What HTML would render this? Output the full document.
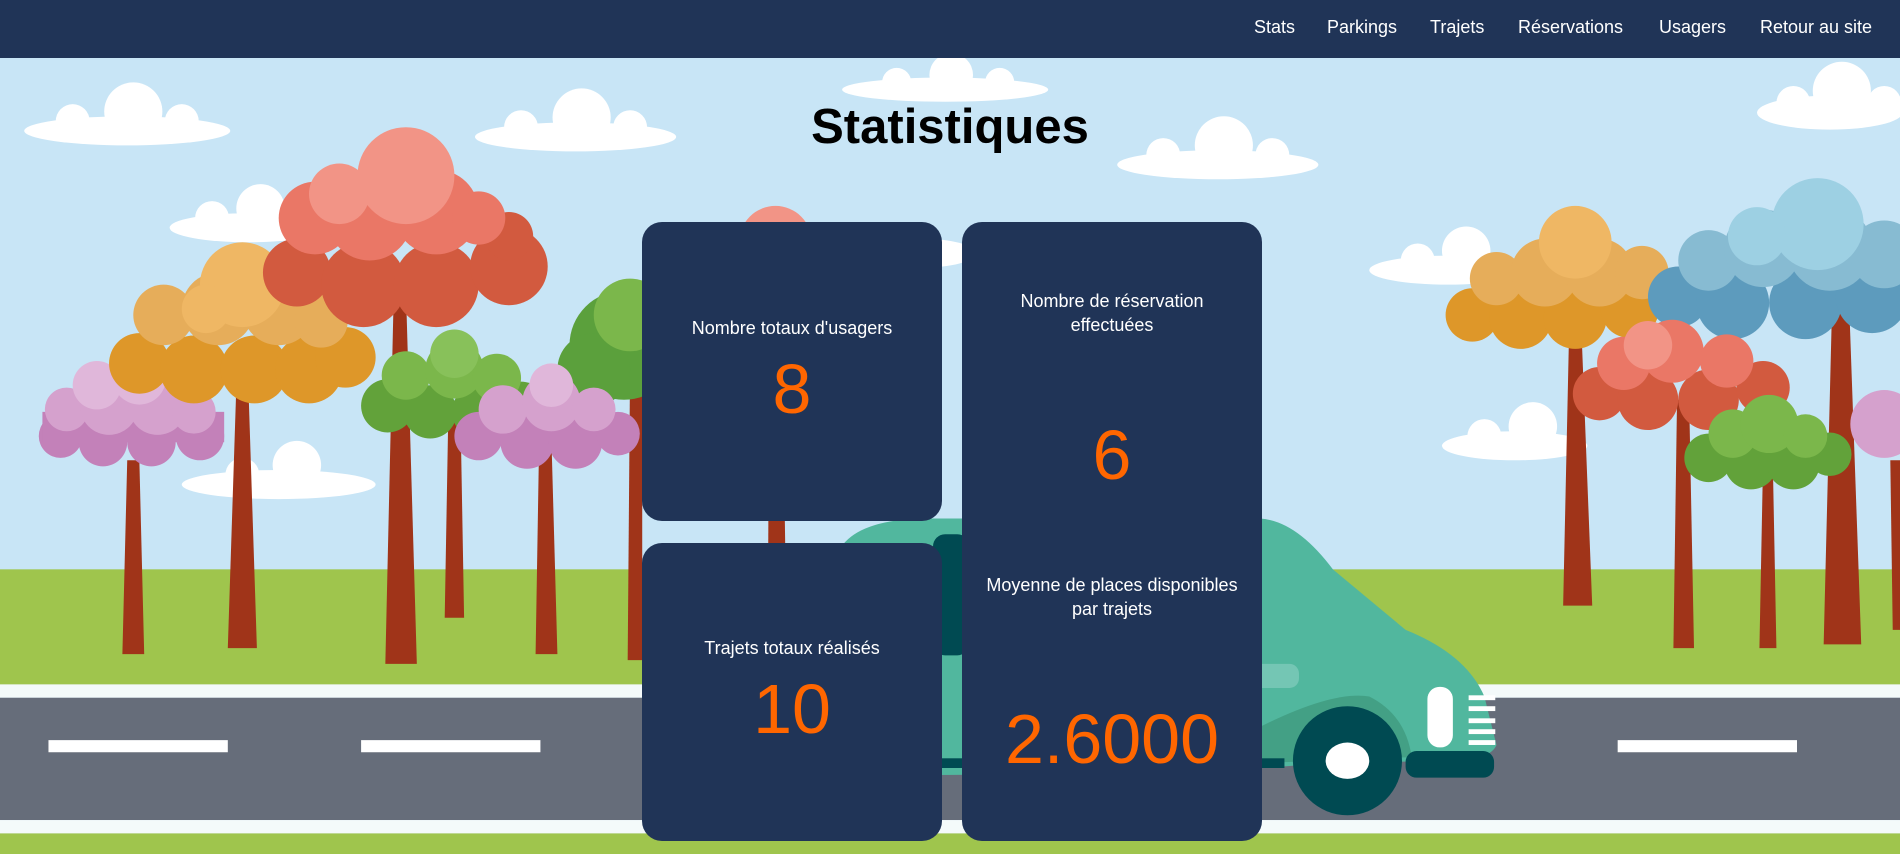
<!DOCTYPE html>
<html><head><meta charset="utf-8"><style>
*{margin:0;padding:0;box-sizing:border-box}
body{width:1900px;height:854px;overflow:hidden;position:relative;font-family:"Liberation Sans",Arial,sans-serif;background:#c8e5f6}
svg.bg{position:absolute;left:0;top:0;width:1900px;height:854px}
nav{position:absolute;left:0;top:0;width:1900px;height:58px;background:#203457;}
nav a{position:absolute;top:17px;color:#fff;font-size:18px;text-decoration:none;white-space:nowrap}
h1{position:absolute;left:0;width:1900px;top:99px;text-align:center;font-size:49px;font-weight:bold;color:#000}
.card{position:absolute;background:#203457;border-radius:20px;color:#fff;}
.t{position:absolute;left:0;right:0;text-align:center;font-size:18px;line-height:24px}
.n{position:absolute;left:0;right:0;text-align:center;font-size:70px;line-height:80px;color:#ff6600}
</style></head><body>
<svg class="bg" viewBox="0 0 1568 705" preserveAspectRatio="none">
<rect width="1568" height="705" fill="#c8e5f6"/>
<g fill="#fff">
<g transform="translate(105,100)"><ellipse cx="0" cy="8" rx="85" ry="12"/><circle cx="-45" cy="0" r="14"/><circle cx="5" cy="-8" r="24"/><circle cx="45" cy="0" r="14"/></g>
<g transform="translate(475,105)"><ellipse cx="0" cy="8" rx="83" ry="12"/><circle cx="-45" cy="0" r="14"/><circle cx="5" cy="-8" r="24"/><circle cx="45" cy="0" r="14"/></g>
<g transform="translate(780,68)"><ellipse cx="0" cy="6" rx="85" ry="10"/><circle cx="-40" cy="0" r="12"/><circle cx="5" cy="-6" r="18"/><circle cx="45" cy="0" r="12"/></g>
<g transform="translate(1005,128)"><ellipse cx="0" cy="8" rx="83" ry="12"/><circle cx="-45" cy="0" r="14"/><circle cx="5" cy="-8" r="24"/><circle cx="45" cy="0" r="14"/></g>
<g transform="translate(1510,85)"><ellipse cx="0" cy="8" rx="60" ry="14"/><circle cx="-30" cy="0" r="14"/><circle cx="10" cy="-10" r="24"/><circle cx="45" cy="0" r="14"/></g>
<g transform="translate(205,180)"><ellipse cx="0" cy="8" rx="65" ry="12"/><circle cx="-30" cy="0" r="14"/><circle cx="10" cy="-8" r="20"/></g>
<g transform="translate(1195,215)"><ellipse cx="0" cy="8" rx="65" ry="12"/><circle cx="-25" cy="0" r="14"/><circle cx="15" cy="-8" r="20"/></g>
<g transform="translate(1250,360)"><ellipse cx="0" cy="8" rx="60" ry="12"/><circle cx="-25" cy="0" r="14"/><circle cx="15" cy="-8" r="20"/></g>
<g transform="translate(230,392)"><ellipse cx="0" cy="8" rx="80" ry="12"/><circle cx="-30" cy="0" r="14"/><circle cx="15" cy="-8" r="20"/></g>
<g transform="translate(760,205)"><ellipse cx="0" cy="4" rx="45" ry="12"/></g>
</g>
<rect y="470" width="1568" height="95" fill="#9fc54d"/>
<rect y="565" width="1568" height="11" fill="#f4fafa"/>
<rect y="576" width="1568" height="101" fill="#666d7a"/>
<rect y="677" width="1568" height="11" fill="#f4fafa"/>
<rect y="688" width="1568" height="17" fill="#9fc54d"/>
<g fill="#fff"><rect x="40" y="611" width="148" height="10"/><rect x="298" y="611" width="148" height="10"/><rect x="1335" y="611" width="148" height="10"/></g>
<g fill="#a03419">
<polygon points="105,380 115,380 119,540 101,540"/>
<polygon points="195,320 205,320 212,535 188,535"/>
<polygon points="325,240 335,240 344,548 318,548"/>
<polygon points="370,340 380,340 383,510 367,510"/>
<polygon points="445,360 455,360 460,540 442,540"/>
<polygon points="520,300 530,300 530,545 518,545"/>
<polygon points="635,250 645,250 648,450 634,450"/>
<polygon points="1295,270 1305,270 1314,500 1290,500"/>
<polygon points="1512,250 1526,250 1536,532 1505,532"/>
<polygon points="1384,330 1394,330 1398,535 1381,535"/>
<polygon points="1455,380 1463,380 1466,535 1452,535"/>
<polygon points="1560,380 1568,380 1568,520 1562,520"/>
</g>
<g fill="#5ba03c"><circle cx="515" cy="285" r="45"/><circle cx="490" cy="305" r="30"/></g>
<g fill="#7bb74b"><circle cx="520" cy="260" r="30"/></g>
<g fill="#f29486"><circle cx="640" cy="200" r="30"/></g>
<!-- pink left -->
<g fill="#c381b9"><circle cx="50" cy="360" r="18"/><circle cx="85" cy="365" r="20"/><circle cx="125" cy="365" r="20"/><circle cx="165" cy="360" r="20"/><rect x="35" y="340" width="150" height="25"/></g>
<g fill="#d5a1cd"><circle cx="55" cy="338" r="18"/><circle cx="90" cy="335" r="24"/><circle cx="130" cy="335" r="24"/><circle cx="160" cy="340" r="18"/></g>
<g fill="#e0b7da"><circle cx="80" cy="318" r="20"/><circle cx="115" cy="312" r="22"/></g>
<!-- orange left -->
<g fill="#de9729"><circle cx="115" cy="300" r="25"/><circle cx="160" cy="305" r="28"/><circle cx="210" cy="305" r="28"/><circle cx="255" cy="305" r="28"/><circle cx="285" cy="295" r="25"/></g>
<g fill="#e6ad5a"><circle cx="135" cy="260" r="25"/><circle cx="180" cy="255" r="30"/><circle cx="230" cy="255" r="30"/><circle cx="265" cy="265" r="22"/></g>
<g fill="#efb764"><circle cx="200" cy="235" r="35"/><circle cx="170" cy="255" r="20"/></g>
<!-- red big -->
<g fill="#d25a3f"><circle cx="245" cy="225" r="28"/><circle cx="300" cy="235" r="35"/><circle cx="360" cy="235" r="35"/><circle cx="420" cy="220" r="32"/><circle cx="420" cy="195" r="20"/></g>
<g fill="#ea7766"><circle cx="260" cy="180" r="30"/><circle cx="305" cy="180" r="35"/><circle cx="360" cy="175" r="35"/><circle cx="395" cy="180" r="22"/></g>
<g fill="#f29486"><circle cx="335" cy="145" r="40"/><circle cx="280" cy="160" r="25"/></g>
<!-- green small -->
<g fill="#62a23a"><circle cx="320" cy="335" r="22"/><circle cx="355" cy="340" r="22"/><circle cx="395" cy="340" r="22"/><circle cx="430" cy="335" r="20"/></g>
<g fill="#7bb74b"><circle cx="335" cy="310" r="20"/><circle cx="375" cy="305" r="24"/><circle cx="410" cy="312" r="20"/></g>
<g fill="#88c15a"><circle cx="375" cy="292" r="20"/></g>
<!-- pink mid -->
<g fill="#c381b9"><circle cx="395" cy="360" r="20"/><circle cx="435" cy="365" r="22"/><circle cx="475" cy="365" r="22"/><circle cx="510" cy="358" r="18"/></g>
<g fill="#d5a1cd"><circle cx="415" cy="338" r="20"/><circle cx="455" cy="332" r="24"/><circle cx="490" cy="338" r="18"/></g>
<g fill="#e0b7da"><circle cx="455" cy="318" r="18"/></g>
<!-- right orange -->
<g fill="#de9729"><circle cx="1215" cy="260" r="22"/><circle cx="1255" cy="262" r="26"/><circle cx="1300" cy="262" r="26"/><circle cx="1345" cy="255" r="24"/></g>
<g fill="#e6ad5a"><circle cx="1235" cy="230" r="22"/><circle cx="1275" cy="225" r="28"/><circle cx="1320" cy="225" r="28"/><circle cx="1355" cy="225" r="22"/></g>
<g fill="#efb764"><circle cx="1300" cy="200" r="30"/></g>
<!-- blue -->
<g fill="#5d9bbd"><circle cx="1385" cy="245" r="25"/><circle cx="1430" cy="250" r="30"/><circle cx="1490" cy="250" r="30"/><circle cx="1545" cy="245" r="30"/></g>
<g fill="#87bbd2"><circle cx="1410" cy="215" r="25"/><circle cx="1455" cy="205" r="32"/><circle cx="1510" cy="205" r="35"/><circle cx="1555" cy="210" r="28"/></g>
<g fill="#9dd0e3"><circle cx="1500" cy="185" r="38"/><circle cx="1450" cy="195" r="24"/></g>
<!-- red right -->
<g fill="#d25a3f"><circle cx="1320" cy="325" r="22"/><circle cx="1360" cy="330" r="25"/><circle cx="1410" cy="330" r="25"/><circle cx="1455" cy="320" r="22"/></g>
<g fill="#ea7766"><circle cx="1340" cy="300" r="22"/><circle cx="1380" cy="290" r="26"/><circle cx="1425" cy="298" r="22"/></g>
<g fill="#f29486"><circle cx="1360" cy="285" r="20"/></g>
<!-- green right -->
<g fill="#62a23a"><circle cx="1410" cy="378" r="20"/><circle cx="1445" cy="382" r="22"/><circle cx="1480" cy="382" r="22"/><circle cx="1510" cy="375" r="18"/></g>
<g fill="#7bb74b"><circle cx="1430" cy="358" r="20"/><circle cx="1460" cy="350" r="24"/><circle cx="1490" cy="360" r="18"/></g>
<g fill="#d5a1cd"><circle cx="1555" cy="350" r="28"/></g>
<path d="M690,640 L690,460 Q700,430 760,428 L1040,428 Q1070,430 1100,470 L1160,520 Q1210,540 1225,575 L1235,615 Q1230,627 1200,628 L1090,630 Q1000,640 690,640Z" fill="#51b79e"/>
<path d="M1040,600 Q1100,570 1130,575 Q1160,590 1165,625 L1040,630Z" fill="#43a085"/>
<rect x="770" y="441" width="30" height="100" rx="10" fill="#004a52"/>
<rect x="1030" y="548" width="42" height="20" rx="8" fill="#74c6b4"/>
<rect x="770" y="626" width="290" height="8" fill="#004a52"/>
<circle cx="1112" cy="628" r="45" fill="#004a52"/>
<ellipse cx="1112" cy="628" rx="18" ry="15" fill="#fff"/>
<rect x="1160" y="620" width="73" height="22" rx="9" fill="#004a52"/>
<rect x="1178" y="567" width="21" height="50" rx="10" fill="#fff"/>
<g fill="#fff"><rect x="1212" y="574" width="22" height="4"/><rect x="1212" y="583" width="22" height="4"/><rect x="1212" y="593" width="22" height="4"/><rect x="1212" y="602" width="22" height="4"/><rect x="1212" y="611" width="22" height="4"/></g>
</svg>
<nav>
<a style="left:1254px">Stats</a><a style="left:1327px">Parkings</a><a style="left:1430px">Trajets</a><a style="left:1518px">Réservations</a><a style="left:1659px">Usagers</a><a style="left:1760px">Retour au site</a>
</nav>
<h1>Statistiques</h1>
<div class="card" style="left:642px;top:222px;width:300px;height:299px">
<div class="t" style="top:94px">Nombre totaux d'usagers</div><div class="n" style="top:127px">8</div></div>
<div class="card" style="left:642px;top:543px;width:300px;height:298px">
<div class="t" style="top:93px">Trajets totaux réalisés</div><div class="n" style="top:126px">10</div></div>
<div class="card" style="left:962px;top:222px;width:300px;height:619px">
<div class="t" style="top:67px">Nombre de réservation<br>effectuées</div><div class="n" style="top:193px">6</div>
<div class="t" style="top:351px">Moyenne de places disponibles<br>par trajets</div><div class="n" style="top:477px">2.6000</div></div>
</body></html>
